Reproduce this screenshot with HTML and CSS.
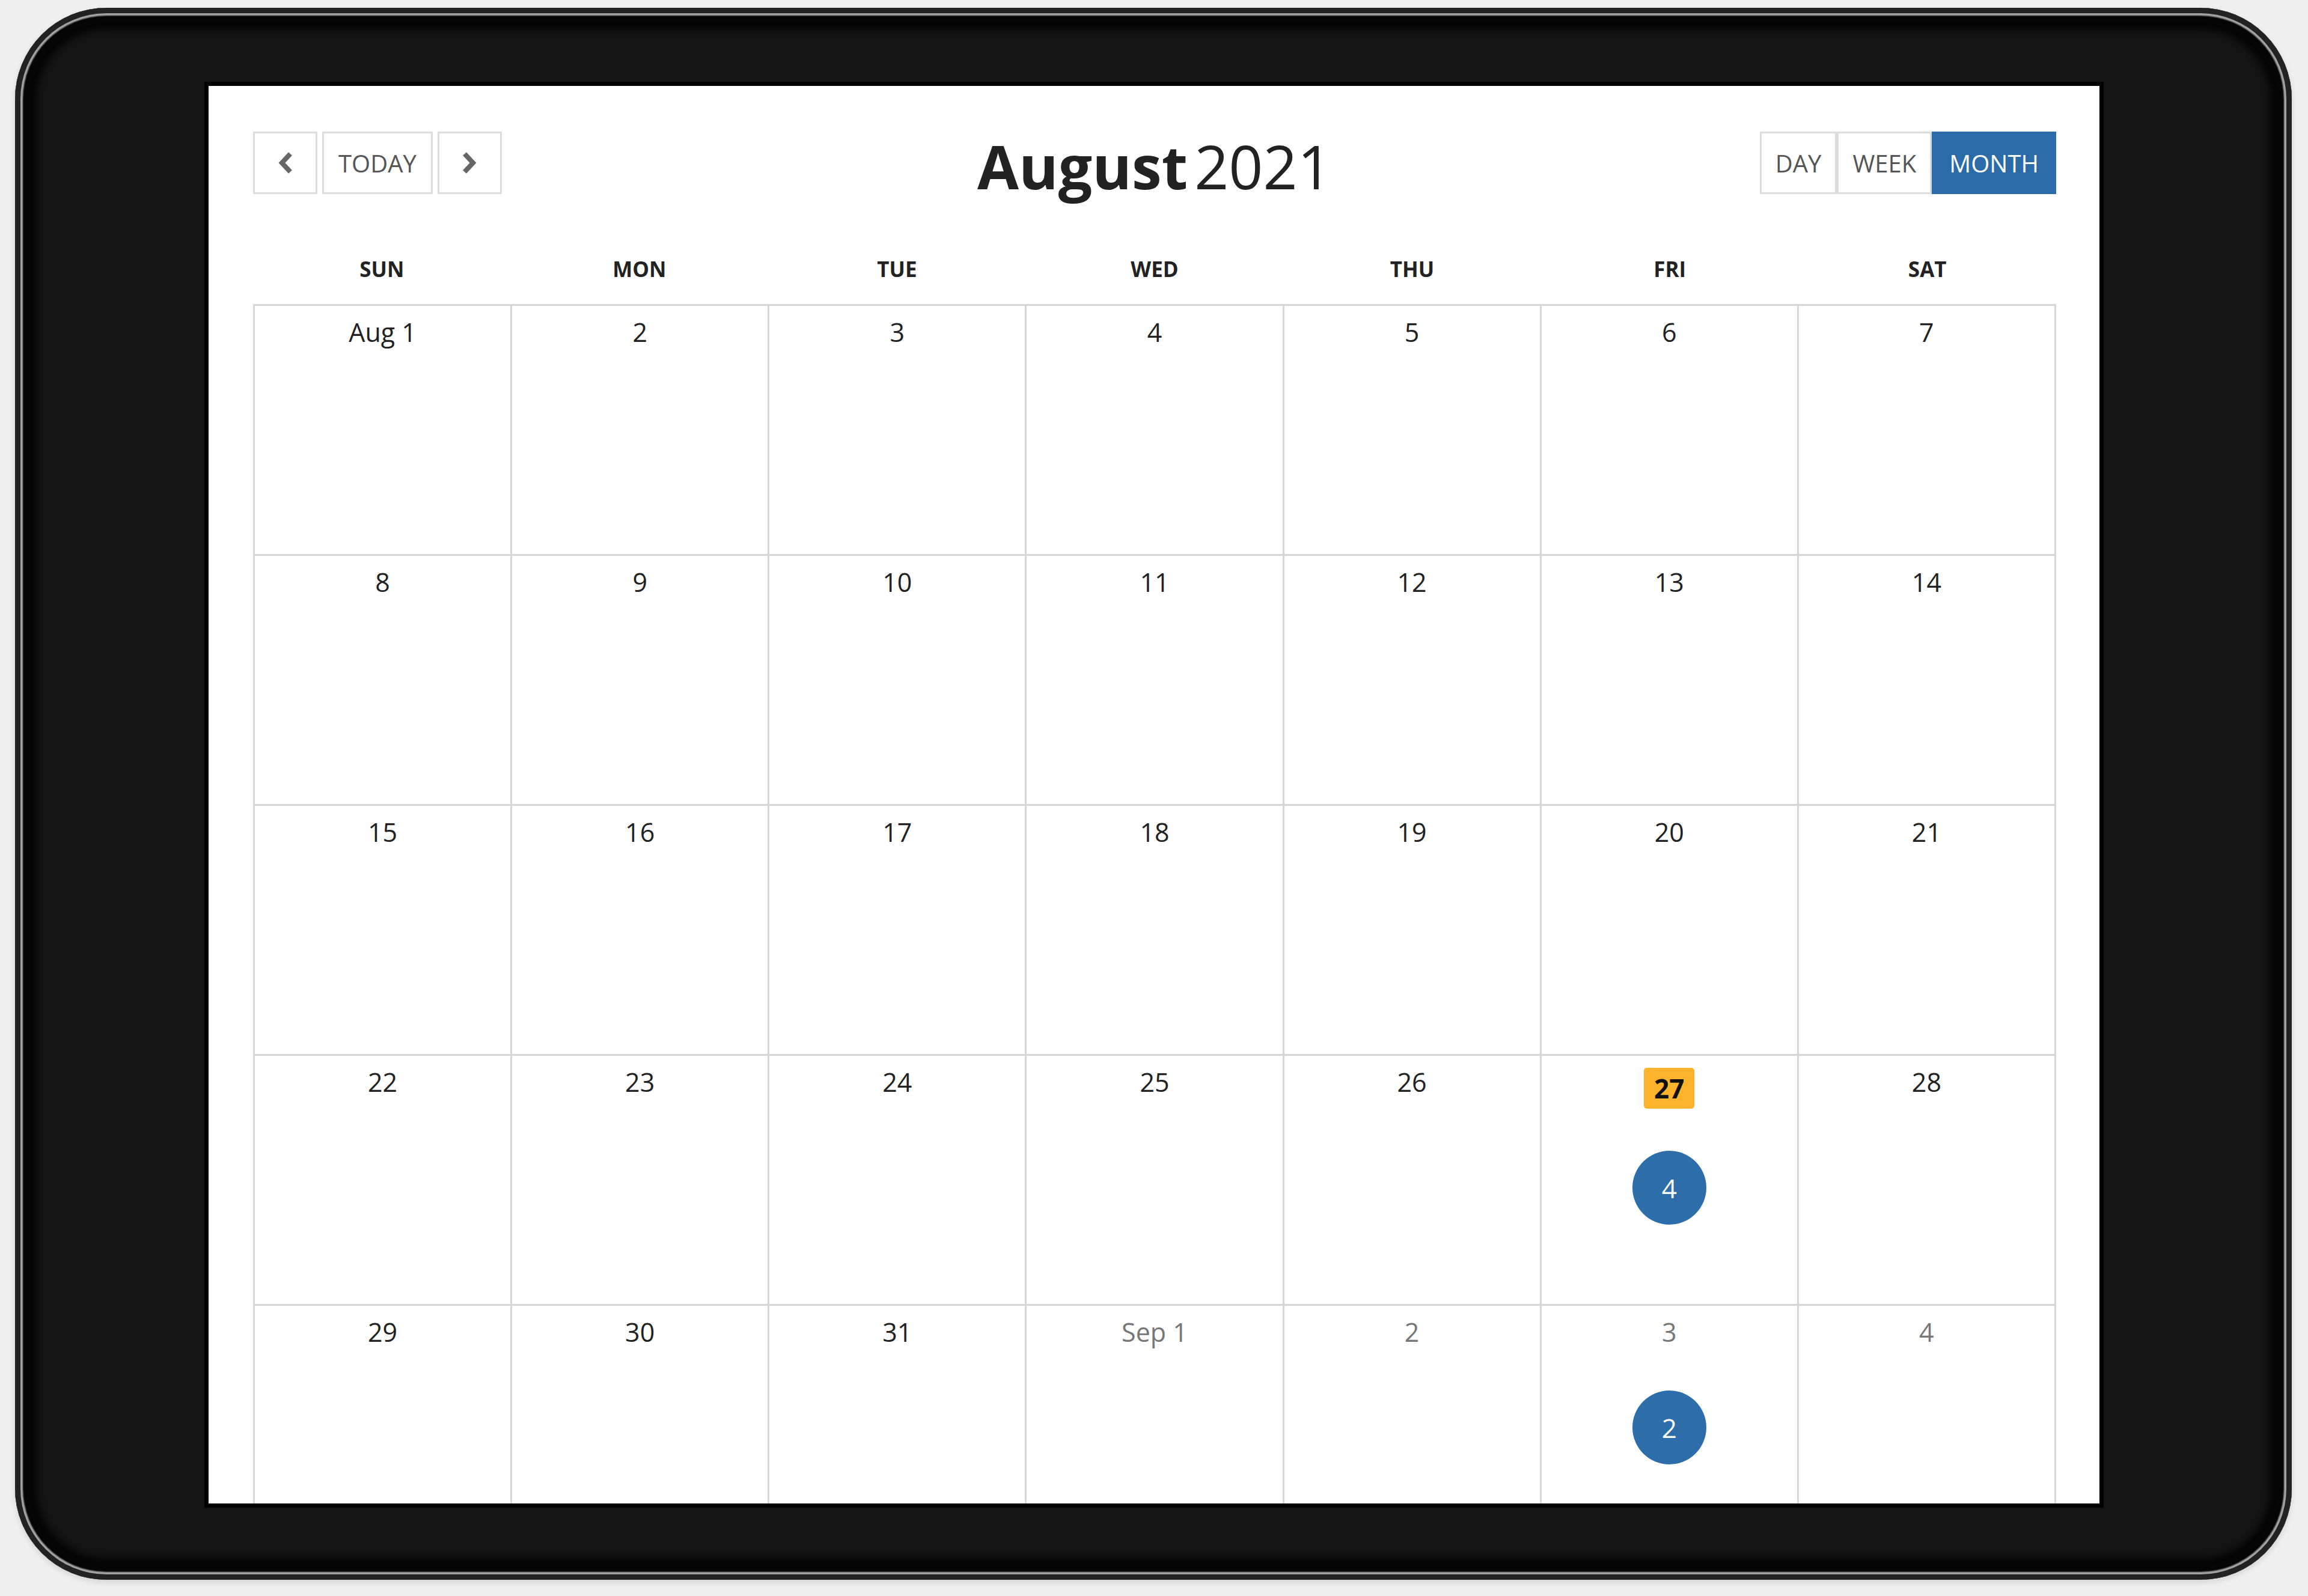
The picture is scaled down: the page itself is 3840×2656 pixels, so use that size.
FILE: index.html
```html
<!DOCTYPE html>
<html lang="en">
<head>
<meta charset="utf-8">
<title>Calendar – August 2021</title>
<link rel="stylesheet" href="styles.css">
</head>
<body>
<div class="page">
  <div class="device">
    <div class="screen">
      <div class="calendar">
        <div class="toolbar">
          <div class="nav-group">
            <button class="btn btn-icon" aria-label="Previous">
              <svg width="26" height="36" viewBox="0 0 26 36"><path d="M21 3 L7 18 L21 33" fill="none" stroke="#666" stroke-width="8"/></svg>
            </button>
            <button class="btn">TODAY</button>
            <button class="btn btn-icon" aria-label="Next">
              <svg width="26" height="36" viewBox="0 0 26 36"><path d="M5 3 L19 18 L5 33" fill="none" stroke="#666" stroke-width="8"/></svg>
            </button>
          </div>
          <h1 class="title"><span class="title-month">August</span><span class="title-year">2021</span></h1>
          <div class="view-group">
            <button class="btn btn-view">DAY</button>
            <button class="btn btn-view">WEEK</button>
            <button class="btn btn-view btn-active">MONTH</button>
          </div>
        </div>

        <div class="weekdays">
          <div class="weekday">SUN</div>
          <div class="weekday">MON</div>
          <div class="weekday">TUE</div>
          <div class="weekday">WED</div>
          <div class="weekday">THU</div>
          <div class="weekday">FRI</div>
          <div class="weekday">SAT</div>
        </div>

        <div class="grid">
          <div class="cell"><span class="date">Aug 1</span></div>
          <div class="cell"><span class="date">2</span></div>
          <div class="cell"><span class="date">3</span></div>
          <div class="cell"><span class="date">4</span></div>
          <div class="cell"><span class="date">5</span></div>
          <div class="cell"><span class="date">6</span></div>
          <div class="cell"><span class="date">7</span></div>

          <div class="cell"><span class="date">8</span></div>
          <div class="cell"><span class="date">9</span></div>
          <div class="cell"><span class="date">10</span></div>
          <div class="cell"><span class="date">11</span></div>
          <div class="cell"><span class="date">12</span></div>
          <div class="cell"><span class="date">13</span></div>
          <div class="cell"><span class="date">14</span></div>

          <div class="cell"><span class="date">15</span></div>
          <div class="cell"><span class="date">16</span></div>
          <div class="cell"><span class="date">17</span></div>
          <div class="cell"><span class="date">18</span></div>
          <div class="cell"><span class="date">19</span></div>
          <div class="cell"><span class="date">20</span></div>
          <div class="cell"><span class="date">21</span></div>

          <div class="cell"><span class="date">22</span></div>
          <div class="cell"><span class="date">23</span></div>
          <div class="cell"><span class="date">24</span></div>
          <div class="cell"><span class="date">25</span></div>
          <div class="cell"><span class="date">26</span></div>
          <div class="cell"><span class="date date-today">27</span><span class="events">4</span></div>
          <div class="cell"><span class="date">28</span></div>

          <div class="cell"><span class="date">29</span></div>
          <div class="cell"><span class="date">30</span></div>
          <div class="cell"><span class="date">31</span></div>
          <div class="cell"><span class="date date-other">Sep 1</span></div>
          <div class="cell"><span class="date date-other">2</span></div>
          <div class="cell"><span class="date date-other">3</span><span class="events">2</span></div>
          <div class="cell"><span class="date date-other">4</span></div>
        </div>
      </div>
    </div>
  </div>
</div>
</body>
</html>
```

FILE: styles.css
```css
* {
  box-sizing: border-box;
}

html, body {
  margin: 0;
  padding: 0;
  background: #efefef;
}

body {
  font-family: "Open Sans", "Noto Sans", "Liberation Sans", sans-serif;
  color: #222;
}

.page {
  width: 3840px;
  height: 2656px;
  padding: 13px 0 0 25px;
  overflow: hidden;
}

.device {
  width: 3788px;
  height: 2616px;
  padding: 123px 313px 120px 315px;
  border-radius: 152px;
  background: #141414;
  box-shadow:
    inset 0 0 0 9px #222,
    inset 0 0 2px 13px #a4a4a4,
    inset 0 0 10px 36px #050505,
    0 4px 10px rgba(0, 0, 0, 0.12);
}

.screen {
  width: 100%;
  height: 100%;
  border: 7px solid #000;
  background: #fff;
  overflow: hidden;
}

.calendar {
  padding: 76px 72px 0 74px;
}

/* Toolbar */
.toolbar {
  display: flex;
  align-items: center;
  justify-content: space-between;
  height: 104px;
  position: relative;
}

.nav-group {
  display: flex;
  gap: 8px;
  height: 104px;
}

.view-group {
  display: flex;
  height: 104px;
}

.btn {
  height: 104px;
  padding: 0 24px;
  border: 3px solid #dcdcdc;
  background: #fff;
  font-family: "Open Sans", "Noto Sans", sans-serif;
  font-size: 40px;
  color: #555;
  display: flex;
  align-items: center;
  justify-content: center;
  cursor: pointer;
}

.btn-icon {
  width: 107px;
  padding: 0;
}

.btn-view {
  padding: 0 23px;
}

.btn-active {
  background: #2b6ca8;
  border-color: #2b6ca8;
  color: #fff;
  padding: 0 26px;
}

.title {
  margin: 0;
  padding-top: 10px;
  font-size: 100px;
  font-weight: 400;
  color: #222;
  line-height: normal;
  position: absolute;
  left: 50%;
  transform: translateX(-50%);
  white-space: nowrap;
}

.title-month {
  font-weight: 700;
}

.title-year {
  margin-left: 11px;
}

/* Weekday header */
.weekdays {
  display: grid;
  grid-template-columns: repeat(7, 1fr);
  margin-top: 101px;
  padding-bottom: 34px;
}

.weekday {
  text-align: center;
  font-size: 35px;
  font-weight: 700;
  line-height: 48px;
  color: #222;
}

/* Month grid */
.grid {
  display: grid;
  grid-template-columns: repeat(7, 1fr);
  grid-auto-rows: 416px;
  border-top: 3px solid #d6d6d6;
  border-left: 3px solid #d6d6d6;
}

.cell {
  border-right: 3px solid #d6d6d6;
  border-bottom: 3px solid #d6d6d6;
  display: flex;
  flex-direction: column;
  align-items: center;
  padding-top: 15px;
}

.date {
  font-size: 43px;
  line-height: 58px;
  color: #222;
}

.date-other {
  color: #777;
}

.date-today {
  margin-top: 5px;
  margin-bottom: 2px;
  height: 68px;
  line-height: 68px;
  padding: 0 17px;
  border-radius: 5px;
  background: #fdb32b;
  color: #111;
  font-weight: 700;
  font-size: 44px;
}

.events {
  margin-top: 68px;
  width: 123px;
  height: 123px;
  border-radius: 50%;
  background: #2d6da9;
  color: #fff;
  font-size: 44px;
  display: flex;
  align-items: center;
  justify-content: center;
}
```
